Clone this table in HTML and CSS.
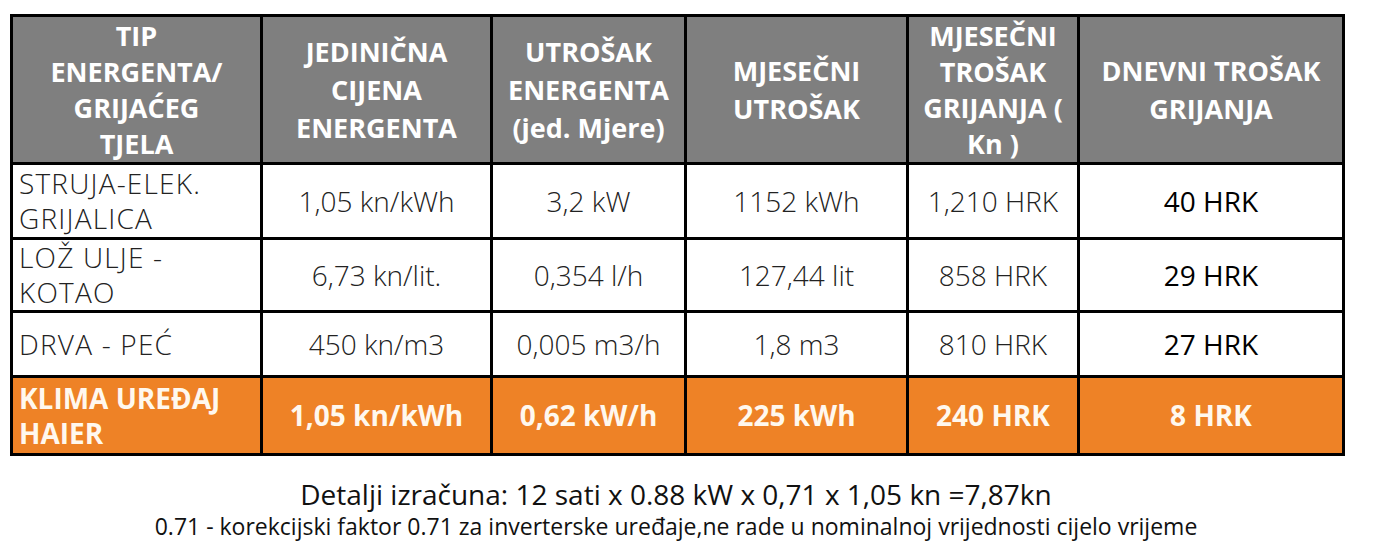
FILE: index.html
```html
<!DOCTYPE html>
<html lang="hr">
<head>
    <meta charset="UTF-8">
    <title>Usporedba troškova grijanja</title>
    <link rel="stylesheet" href="styles.css">
</head>
<body>
    <div class="page">
        <table class="cost-table">
            <colgroup>
                <col class="c1"><col class="c2"><col class="c3"><col class="c4"><col class="c5"><col class="c6">
            </colgroup>
            <tr class="head">
                <th><div class="tall">TIP<br>ENERGENTA/<br>GRIJAĆEG<br>TJELA</div></th>
                <th>JEDINIČNA<br>CIJENA<br>ENERGENTA</th>
                <th>UTROŠAK<br>ENERGENTA<br>(jed. Mjere)</th>
                <th>MJESEČNI<br>UTROŠAK</th>
                <th><div class="tall">MJESEČNI<br>TROŠAK<br>GRIJANJA (<br>Kn )</div></th>
                <th>DNEVNI TROŠAK<br>GRIJANJA</th>
            </tr>
            <tr class="r1">
                <td class="name">STRUJA-ELEK.<br>GRIJALICA</td>
                <td>1,05 kn/kWh</td>
                <td>3,2 kW</td>
                <td>1152 kWh</td>
                <td>1,210 HRK</td>
                <td class="daily">40 HRK</td>
            </tr>
            <tr class="r2">
                <td class="name">LOŽ ULJE -<br>KOTAO</td>
                <td>6,73 kn/lit.</td>
                <td>0,354 l/h</td>
                <td>127,44 lit</td>
                <td>858 HRK</td>
                <td class="daily">29 HRK</td>
            </tr>
            <tr class="r3">
                <td class="name">DRVA - PEĆ</td>
                <td>450 kn/m3</td>
                <td>0,005 m3/h</td>
                <td>1,8 m3</td>
                <td>810 HRK</td>
                <td class="daily">27 HRK</td>
            </tr>
            <tr class="hl">
                <td class="name">KLIMA UREĐAJ<br>HAIER</td>
                <td>1,05 kn/kWh</td>
                <td>0,62 kW/h</td>
                <td>225 kWh</td>
                <td>240 HRK</td>
                <td>8 HRK</td>
            </tr>
        </table>

        <div class="notes">
            <p class="calc">Detalji izračuna: 12 sati x 0.88 kW x 0,71 x 1,05 kn =7,87kn</p>
            <p class="factor">0.71 - korekcijski faktor 0.71 za inverterske uređaje,ne rade u nominalnoj vrijednosti cijelo vrijeme</p>
        </div>
    </div>
</body>
</html>
```

FILE: styles.css
```css
body {
    margin: 0;
    background: #fff;
    font-family: "Open Sans", sans-serif;
    color: #1a1a1a;
}
.page {
    width: 1332px;
    padding: 14px 0 0 10px;
}
.cost-table {
    width: 1332px;
    border-collapse: collapse;
    table-layout: fixed;
    border: 3px solid #000;
}
.c1 { width: 250px; }
.c2 { width: 230px; }
.c3 { width: 194px; }
.c4 { width: 222px; }
.c5 { width: 171px; }
.c6 { width: 265px; }

.cost-table th,
.cost-table td {
    border: 3px solid #000;
    text-align: center;
    vertical-align: middle;
    padding: 0 4px;
}
.head th {
    background: #7f7f7f;
    color: #fff;
    font-weight: 700;
    font-size: 27px;
    line-height: 38px;
    height: 145px;
    padding: 0 2px;
    white-space: nowrap;
}
/* cells with four lines need a tighter line height to fit */
.tall {
    line-height: 36px;
}
.cost-table td {
    font-size: 28px;
    font-weight: 300;
    line-height: 35px;
    color: #222;
    white-space: nowrap;
}
.cost-table td.name {
    text-align: left;
    padding-left: 6px;
    letter-spacing: 1.2px;
}
.cost-table td.daily {
    font-weight: 400;
    color: #000;
}
.r1 td { height: 72px; }
.r2 td { height: 69px; }
.r3 td { height: 62px; }
.hl td {
    height: 75px;
    background: #ee8226;
    color: #fff8ee;
    font-weight: 700;
}
.hl td.name {
    letter-spacing: 0;
}

.notes {
    text-align: center;
    color: #111;
}
.notes p {
    margin: 0;
}
.calc {
    padding-top: 21px;
    font-size: 28px;
    line-height: 34px;
}
.factor {
    font-size: 23px;
    line-height: 30px;
}
```
